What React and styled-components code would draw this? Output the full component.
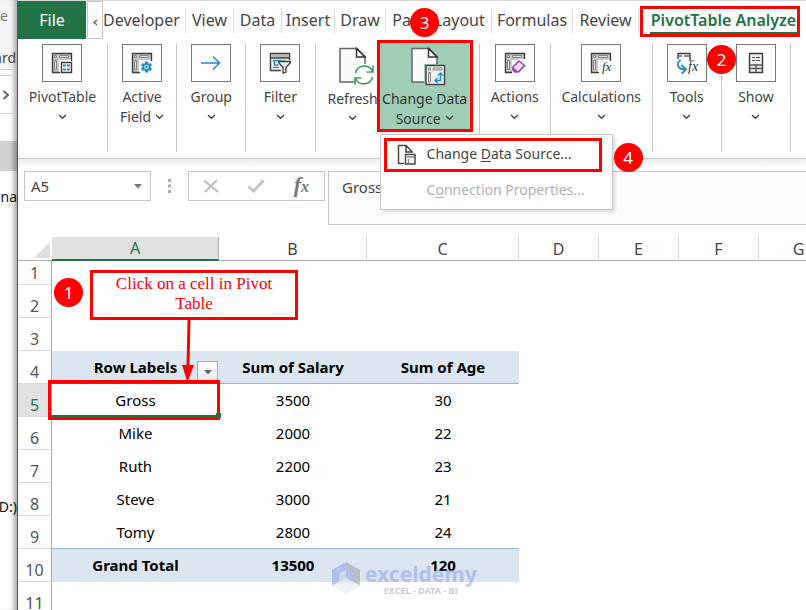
import styled, { createGlobalStyle } from "styled-components";
import { useState } from "react";

const tabs = ["Developer", "View", "Data", "Insert", "Draw", "Page Layout", "Formulas", "Review"];

const columns = ["A", "B", "C", "D", "E", "F", "G"];

const rows = [
  { n: 1 },
  { n: 2 },
  { n: 3 },
  { n: 4, kind: "head", cells: ["Row Labels", "Sum of Salary", "Sum of Age"] },
  { n: 5, cells: ["Gross", 3500, 30] },
  { n: 6, cells: ["Mike", 2000, 22] },
  { n: 7, cells: ["Ruth", 2200, 23] },
  { n: 8, cells: ["Steve", 3000, 21] },
  { n: 9, cells: ["Tomy", 2800, 24] },
  { n: 10, kind: "total", cells: ["Grand Total", 13500, 120] },
  { n: 11 },
];

const Chevron = () => (
  <svg width="9" height="6" viewBox="0 0 9 6" fill="none" stroke="#444" strokeWidth="1.4">
    <path d="M1 1l3.5 3.2L8 1" />
  </svg>
);

// small pivot grid shared by most of the ribbon icons
const PivotGrid = ({ children }) => (
  <svg width="22" height="22" viewBox="0 0 22 22" fill="none">
    <path d="M1.5 20.5V1.5h19v19z" fill="#c8c8c8" stroke="#3b3b3b" strokeWidth="1.4" />
    <path d="M8 8h12v12H8z" fill="#f7f7f7" />
    <path d="M3.5 3.5h2v2h-2zM8.5 3.5h9v2h-9zM3.5 8.5h2v9h-2z" fill="#ddd" stroke="#858585" />
    {children}
  </svg>
);

const PivotIcon = () => (
  <PivotGrid>
    <path d="M9 9h13v13H9z" fill="#fff" />
    <path d="M10.5 10.5h10v10h-10z" fill="#fff" stroke="#3b3b3b" strokeWidth="1.4" />
    <path d="M12 12.5h3v2h-3zM16 12.500h3v2h-3zM12 16.500h3v2h-3zM16 16.500h3v2h-3z" fill="#1e8bcd" />
  </PivotGrid>
);

const FieldIcon = () => (
  <PivotGrid>
    <path d="M12 9h10v13H9V14z" fill="#fff" />
    <path
      d="M15.500 9.500v11M10.700 12.200l9.600 5.600M20.300 12.200l-9.600 5.600"
      stroke="#1e8bcd"
      strokeWidth="3"
    />
    <circle cx="15.500" cy="15" r="3.200" fill="#d8ecf8" stroke="#1e8bcd" strokeWidth="1.800" />
    <circle cx="15.500" cy="15" r="1.200" fill="#1e8bcd" />
  </PivotGrid>
);

const GroupIcon = () => (
  <svg width="22" height="22" viewBox="0 0 22 22" fill="none" stroke="#1e8bcd" strokeWidth="1.500">
    <path d="M1 11h19M13 4.500l6.500 6.500-6.500 6.500" />
  </svg>
);

const FilterIcon = () => (
  <svg width="22" height="22" viewBox="0 0 22 22" fill="none">
    <path d="M1.500 1.500h19v17h-19z" fill="#fff" stroke="#3b3b3b" strokeWidth="1.500" />
    <path d="M2 2h18v4H2z" fill="#b5b5b5" />
    <path d="M2 6h18" stroke="#3b3b3b" strokeWidth="1.400" />
    <path d="M4 8.500h13M5.500 8v5h4" stroke="#1e8bcd" strokeWidth="1.600" />
    <path d="M4 15.500h6" stroke="#777" strokeWidth="1.500" />
    <path d="M13 22h9V8h-2L9 9z" fill="#fff" />
    <path d="M9.500 9.500h12v1l-4.500 5V20l-3 1v-5.500l-4.500-5z" fill="#eee" stroke="#3b3b3b" strokeWidth="1.300" />
  </svg>
);

const ActionsIcon = () => (
  <PivotGrid>
    <path d="M8 13l7-6h7v15H8z" fill="#fff" />
    <path d="M9 15l6-6 5.500 4.500-6 6.500H11l-2-2z" fill="#f4e3f8" stroke="#9b3fb5" strokeWidth="1.600" />
    <path d="M9 15l5.500 5H11l-2-2z" fill="#9b3fb5" />
  </PivotGrid>
);

const FxMark = ({ x, y, size }) => (
  <text x={x} y={y} fontFamily="Liberation Serif, serif" fontStyle="italic" fontSize={size} fill="#333">
    fx
  </text>
);

const CalcIcon = () => (
  <PivotGrid>
    <path d="M9 9h13v13H9z" fill="#fff" />
    <FxMark x="12" y="19" size="13" />
  </PivotGrid>
);

const ToolsIcon = () => (
  <svg width="24" height="22" viewBox="0 0 24 22" fill="none">
    <path d="M3 7V1.500h12V9" stroke="#3b3b3b" strokeWidth="1.400" />
    <path d="M4 4h3M9 4h5" stroke="#888" strokeWidth="2" />
    <path d="M5.500 8C.500 12 3 17.500 10 17.500M6.500 13l4.500 4.500L6.500 22" stroke="#1e8bcd" strokeWidth="1.800" />
    <FxMark x="13" y="19" size="14" />
  </svg>
);

const ShowIcon = () => (
  <svg width="16" height="22" viewBox="0 0 16 22" fill="none">
    <path d="M1.500 1.500h13v19h-13z" fill="#eee" stroke="#3b3b3b" strokeWidth="1.400" />
    <path d="M4 5.500h3M8 5.500h4M4 8.500h3M8 8.500h4" stroke="#555" />
    <path d="M1 13h14M1 16.500h14M8 13v7" stroke="#555" strokeWidth="1.400" />
  </svg>
);

const PageShape = () => (
  <>
    <path d="M2 1.500h17l8 8V35H2z" fill="#fafafa" stroke="#666" strokeWidth="1.500" />
    <path d="M18.500 1.500V10H27z" fill="#fff" stroke="#333" strokeWidth="1.500" />
  </>
);

const RefreshIcon = () => (
  <svg width="42" height="40" viewBox="-6 0 42 40" fill="none">
    <PageShape />
    <circle cx="26" cy="28" r="11" fill="#fff" />
    <path
      d="M17.500 26a9 9 0 0 1 17-1.500M34.500 30a9 9 0 0 1-17 1.500M35 18.500v6.500h-6.500M17 37.500V31h6.500"
      stroke="#3fa45b"
      strokeWidth="1.600"
    />
  </svg>
);

const SourceIcon = () => (
  <svg width="42" height="40" viewBox="-6 0 42 40" fill="none">
    <PageShape />
    <path d="M14 17h22v22H14z" fill="#9fcdb6" />
    <path d="M16 18.500h18.500v19H16z" fill="#f2f2f2" stroke="#444" strokeWidth="1.500" />
    <path d="M18.500 21h2v2h-2zM23 21h9v2h-9zM18.500 25.500h2V35h-2z" fill="#ddd" stroke="#888" />
    <path d="M30.500 26v7.500h-5M28 28.500l2.500-2.500 2.500 2.500M27.500 31L25 33.500l2.500 2.500" stroke="#1e8bcd" strokeWidth="1.500" />
  </svg>
);

const MenuIcon = () => (
  <svg width="20" height="21" viewBox="0 0 20 21" fill="none" stroke="#444" strokeWidth="1.500">
    <path d="M7 19.500H1.500v-18H9l6 6V9M9 1.500V8h6" />
    <path d="M8.500 10.500h9.500v9.500H8.500z" />
    <path d="M10 13h7M11.500 15v4" stroke="#888" />
  </svg>
);

const groupsBefore = [
  { label: "PivotTable", icon: <PivotIcon />, size: 90 },
  { label: "Active", second: "Field", icon: <FieldIcon />, size: 69 },
  { label: "Group", icon: <GroupIcon />, size: 69 },
  { label: "Filter", icon: <FilterIcon />, size: 69 },
];

const groupsAfter = [
  { label: "Actions", icon: <ActionsIcon />, size: 71 },
  { label: "Calculations", icon: <CalcIcon />, size: 102 },
  { label: "Tools", icon: <ToolsIcon />, size: 69 },
  { label: "Show", icon: <ShowIcon />, size: 69 },
];

const RibbonGroup = ({ group }) => (
  <Styled.Group $size={group.size}>
    <Styled.RibbonButton>
      <Styled.IconBox>{group.icon}</Styled.IconBox>
      <Styled.Line>{group.label}</Styled.Line>
      <Styled.Line>
        {group.second}
        <Chevron />
      </Styled.Line>
    </Styled.RibbonButton>
  </Styled.Group>
);

export default function App() {
  const [cellName, setCellName] = useState("A5");
  const [formula, setFormula] = useState("Gross");

  return (
    <>
      <GlobalStyle />
      <Styled.Page>
        <Styled.Behind>
          <Styled.BehindTop>
            <span>te</span>
            <span>ard</span>
          </Styled.BehindTop>
          <Styled.BehindBar>
            <svg width="8" height="12" viewBox="0 0 8 12" fill="none" stroke="#666" strokeWidth="2">
              <path d="M1.500 2l4.500 4-4.500 4" />
            </svg>
          </Styled.BehindBar>
          <Styled.BehindBlock />
          <Styled.BehindText $top={16}>ona</Styled.BehindText>
          <Styled.BehindText $top={290}>D:)</Styled.BehindText>
        </Styled.Behind>

        <Styled.Window>
          <Styled.TabBar>
            <Styled.FileTab>File</Styled.FileTab>
            <Styled.ScrollTab aria-label="Scroll tabs">
              <svg width="5" height="7" viewBox="0 0 5 7" fill="none" stroke="#555" strokeWidth="1.200">
                <path d="M4 1L1 3.500 4 6" />
              </svg>
            </Styled.ScrollTab>
            <Styled.Tabs>
              {tabs.map((tab) => (
                <Styled.Tab key={tab}>{tab}</Styled.Tab>
              ))}
              <Styled.ActiveTab>
                <span>PivotTable Analyze</span>
              </Styled.ActiveTab>
            </Styled.Tabs>
            <Styled.Badge $left={392} $top={7}>3</Styled.Badge>
          </Styled.TabBar>

          <Styled.Ribbon>
            {groupsBefore.map((g) => (
              <RibbonGroup key={g.label} group={g} />
            ))}
            <Styled.Group $size={165}>
              <Styled.RefreshButton>
                <RefreshIcon />
                <Styled.Line>Refresh</Styled.Line>
                <Styled.Line>
                  <Chevron />
                </Styled.Line>
              </Styled.RefreshButton>
              <Styled.SourceButton>
                <SourceIcon />
                <Styled.Line>Change Data</Styled.Line>
                <Styled.Line>
                  Source
                  <Chevron />
                </Styled.Line>
              </Styled.SourceButton>
              <Styled.Menu>
                <Styled.MenuItem $marked>
                  <MenuIcon />
                  <span>
                    Change <u>D</u>ata Source...
                  </span>
                </Styled.MenuItem>
                <Styled.MenuItem disabled>
                  <i />
                  <span>
                    C<u>o</u>nnection Properties...
                  </span>
                </Styled.MenuItem>
                <Styled.Badge $left={233} $top={8}>4</Styled.Badge>
              </Styled.Menu>
            </Styled.Group>
            {groupsAfter.map((g) => (
              <RibbonGroup key={g.label} group={g} />
            ))}
            <Styled.Badge $left={689} $top={6}>2</Styled.Badge>
          </Styled.Ribbon>

          <Styled.FormulaBar>
            <Styled.NameBox>
              <input aria-label="Name box" value={cellName} onChange={(e) => setCellName(e.target.value)} />
              <svg width="8" height="5" viewBox="0 0 8 5">
                <path d="M0 0h8L4 4.500z" fill="#777" />
              </svg>
            </Styled.NameBox>
            <Styled.Dots>
              <svg width="3" height="14" viewBox="0 0 3 14" fill="#aaa">
                <path d="M0 0h3v3H0zM0 5.500h3v3H0zM0 11h3v3H0z" />
              </svg>
            </Styled.Dots>
            <Styled.FxBox>
              <button aria-label="Cancel">
                <svg width="16" height="14" viewBox="0 0 16 14" fill="none" stroke="#bdbdbd" strokeWidth="2.200">
                  <path d="M1 1.500l14 11.500M14 1L2 13" />
                </svg>
              </button>
              <button aria-label="Enter">
                <svg width="18" height="14" viewBox="0 0 18 14" fill="none" stroke="#c4c4c4" strokeWidth="3">
                  <path d="M1.500 7.500l5 4.500L16.500 1.500" />
                </svg>
              </button>
              <Styled.FxButton>
                f<small>x</small>
              </Styled.FxButton>
            </Styled.FxBox>
            <Styled.FormulaInput
              aria-label="Formula"
              value={formula}
              onChange={(e) => setFormula(e.target.value)}
            />
          </Styled.FormulaBar>

          <Styled.Sheet>
            <Styled.Grid>
              <colgroup>
                <col width="34" />
                <col width="167" />
                <col width="148" />
                <col width="152" />
                <col width="80" />
                <col width="80" />
                <col width="80" />
                <col width="80" />
              </colgroup>
              <thead>
                <tr>
                  <Styled.Corner>
                    <svg width="16" height="16" viewBox="0 0 16 16">
                      <path d="M16 0v16H0z" fill="#dfdfdf" />
                    </svg>
                  </Styled.Corner>
                  {columns.map((c) => (
                    <Styled.ColHead key={c} $active={c === "A"}>
                      {c}
                    </Styled.ColHead>
                  ))}
                </tr>
              </thead>
              <tbody>
                {rows.map((row) => (
                  <Styled.Row key={row.n} $short={row.n === 1}>
                    <Styled.RowHead $active={row.n === 5}>{row.n}</Styled.RowHead>
                    {columns.map((c, i) => (
                      <Styled.Cell key={c} $kind={i < 3 ? row.kind : undefined}>
                        {row.cells?.[i]}
                        {row.n === 4 && i === 0 && (
                          <Styled.FilterButton aria-label="Filter row labels">
                            <svg width="8" height="5" viewBox="0 0 8 5">
                              <path d="M0 0h8L4 4.500z" fill="#666" />
                            </svg>
                          </Styled.FilterButton>
                        )}
                        {row.n === 5 && i === 0 && <Styled.Selection />}
                      </Styled.Cell>
                    ))}
                  </Styled.Row>
                ))}
              </tbody>
            </Styled.Grid>

            <Styled.Badge $left={36} $top={41}>1</Styled.Badge>
            <Styled.Callout>Click on a cell in Pivot Table</Styled.Callout>
            <Styled.Arrow width="12" height="64" viewBox="0 0 12 64">
              <path d="M7 0L6 48" stroke="#f00" strokeWidth="3" />
              <path d="M0 46h12L5.500 63z" fill="#f00" />
            </Styled.Arrow>

            <Styled.Watermark>
              <svg width="28" height="32" viewBox="0 0 28 32">
                <path d="M14 0L0 8v16l7-4v-8l7-4z" fill="#7f9bea" />
                <path d="M14 0l14 8v16l-7-4v-8l-7-4z" fill="#8d9aa8" />
                <path d="M14 8l-7 4v8l7-4z" fill="#b9c9ec" />
                <path d="M14 8l7 4v8l-7-4z" fill="#7f9bea" />
                <path d="M0 24l14-8 14 8-14 8z" fill="#dde6ee" />
              </svg>
              <div>
                <b>exceldemy</b>
                <small>EXCEL - DATA - BI</small>
              </div>
            </Styled.Watermark>
          </Styled.Sheet>
        </Styled.Window>
      </Styled.Page>
    </>
  );
}

const GlobalStyle = createGlobalStyle`
  * {
    box-sizing: border-box;
  }

  body {
    margin: 0;
    background: #fff;
    font-family: "Noto Sans", "Open Sans", sans-serif;
    color: #444;
  }

  button, input {
    font: inherit;
    color: inherit;
    margin: 0;
    padding: 0;
    border: none;
    background: none;
  }
`;

const Styled = {
  Page: styled.div`
    display: flex;
    height: 100vh;
    overflow: hidden;
  `,

  Behind: styled.aside`
    width: 17px;
    flex-shrink: 0;
    overflow: hidden;
    font-size: 14px;
    line-height: 20px;
    box-shadow: inset -6px 0 5px -3px rgba(0, 0, 0, 0.35);
  `,

  BehindTop: styled.div`
    display: flex;
    flex-direction: column;
    align-items: flex-end;
    gap: 22px;
    height: 70px;
    padding: 6px 1px 0 0;
    background: rgba(200, 205, 215, 0.2);
    border-bottom: 1px solid #ccc;

    span:first-child {
      padding-right: 8px;
      color: #777;
    }
  `,

  BehindBar: styled.div`
    display: flex;
    align-items: center;
    height: 39px;
    margin-top: 5px;
    padding-left: 2px;
    border-top: 1px solid #ccc;
    border-bottom: 1px solid #ccc;
  `,

  BehindBlock: styled.div`
    height: 30px;
    margin-top: 27px;
    background: rgba(0, 0, 0, 0.18);
  `,

  BehindText: styled.div`
    display: flex;
    justify-content: flex-end;
    margin-top: ${({ $top }) => $top}px;
    color: #111;
  `,

  Window: styled.main`
    flex: 1;
    min-width: 0;
    display: flex;
    flex-direction: column;
    border-left: 1px solid #217346;
    border-top: 1px solid #d6d6d6;
  `,

  TabBar: styled.nav`
    position: relative;
    display: flex;
    height: 38px;
    font-size: 16px;
  `,

  FileTab: styled.button`
    width: 68px;
    background: #217346;
    color: #fff;
  `,

  ScrollTab: styled.button`
    width: 16px;
    margin-left: 1px;
    border: 1px solid #c6c6c6;
  `,

  Tabs: styled.div`
    flex: 1;
    display: grid;
    grid-template-columns: 83fr 48fr 48fr 53fr 51fr 106fr 81fr 66fr 167fr;
    align-items: center;
  `,

  Tab: styled.button`
    height: 25px;
    border-right: 1px solid #ddd;
    white-space: nowrap;
    min-width: 0;
    display: flex;
    justify-content: center;
    align-items: center;

    &:first-child {
      justify-content: flex-start;
    }
  `,

  ActiveTab: styled.button`
    height: 31px;
    margin: 2px 6px 0 1px;
    padding: 0 0 0 7px;
    border: 3px solid #f00;
    color: #217346;
    font-weight: 600;
    white-space: nowrap;
    min-width: 0;

    span {
      display: block;
      line-height: 23px;
      border-bottom: 2px solid #217346;
    }
  `,

  Ribbon: styled.section`
    position: relative;
    display: flex;
    height: 120px;
    padding: 5px 15px 6px 0;
    border-bottom: 1px solid #c6c6c6;
    font-size: 14px;
    line-height: 20px;
  `,

  Group: styled.div`
    position: relative;
    flex: ${({ $size }) => $size} 1 0;
    min-width: 0;
    display: flex;
    justify-content: center;
    border-right: 1px solid #c6c6c6;
  `,

  RibbonButton: styled.button`
    display: flex;
    flex-direction: column;
    align-items: center;
  `,

  IconBox: styled.span`
    display: flex;
    align-items: center;
    justify-content: center;
    width: 40px;
    height: 38px;
    margin-bottom: 5px;
    border: 1px solid #777;
  `,

  Line: styled.span`
    display: flex;
    align-items: center;
    justify-content: center;
    gap: 4px;
    height: 20px;
    white-space: nowrap;
  `,

  RefreshButton: styled.button`
    display: flex;
    flex-direction: column;
    align-items: center;
    width: 64px;
    padding: 3px 0 0 10px;

    svg:first-child {
      margin-bottom: 2px;
    }
  `,

  SourceButton: styled.button`
    display: flex;
    flex-direction: column;
    align-items: center;
    flex: 1;
    height: 92px;
    margin: -4px 6px 0 -3px;
    padding-top: 4px;
    background: #9fcdb6;
    color: #333;
    border: 3px solid #f00;

    svg:first-child {
      margin-bottom: 2px;
    }
  `,

  Menu: styled.div`
    position: absolute;
    z-index: 2;
    left: 64px;
    top: 90px;
    width: 233px;
    height: 76px;
    padding: 3px;
    background: #fff;
    border: 1px solid #c6c6c6;
    box-shadow: 2px 2px 4px rgba(0, 0, 0, 0.15);
  `,

  MenuItem: styled.button`
    display: flex;
    align-items: center;
    gap: 10px;
    width: 218px;
    height: 34px;
    padding: 0 0 2px 10px;
    border: 3px solid ${({ $marked }) => ($marked ? "#f00" : "transparent")};
    color: ${({ disabled }) => (disabled ? "#b0b0b0" : "#444")};
    white-space: nowrap;

    &:disabled {
      padding-top: 4px;
    }

    svg,
    i {
      width: 20px;
      flex-shrink: 0;
    }

    u {
      text-underline-offset: 2px;
    }
  `,

  FormulaBar: styled.section`
    display: flex;
    align-items: flex-start;
    height: 78px;
    padding: 12px 0 0 6px;
    background: linear-gradient(#ececec, #fff 8px);
    font-size: 15px;
  `,

  NameBox: styled.div`
    display: flex;
    align-items: center;
    width: 127px;
    height: 30px;
    padding: 0 8px 0 6px;
    border: 1px solid #c6c6c6;

    input {
      flex: 1;
      min-width: 0;
    }
  `,

  Dots: styled.div`
    display: flex;
    justify-content: center;
    align-items: center;
    width: 37px;
    height: 30px;
  `,

  FxBox: styled.div`
    display: flex;
    align-items: center;
    justify-content: space-between;
    width: 137px;
    height: 30px;
    padding: 0 15px 0 14px;
    border: 1px solid #c6c6c6;

    svg {
      display: block;
    }
  `,

  FxButton: styled.button`
    font-family: "Liberation Serif", serif;
    font-style: italic;
    font-weight: 700;
    font-size: 22px;
    line-height: 24px;
    color: #777;

    small {
      font-size: 16px;
    }
  `,

  FormulaInput: styled.input`
    flex: 1;
    min-width: 0;
    height: 54px;
    margin-left: 3px;
    padding: 0 0 22px 13px;
    border: 1px solid #c6c6c6;
    border-right: none;
    background: #fdfdfd;
  `,

  Sheet: styled.section`
    position: relative;
    flex: 1;
    overflow: hidden;
  `,

  Grid: styled.table`
    table-layout: fixed;
    width: 821px;
    border-collapse: separate;
    border-spacing: 0;
  `,

  Corner: styled.td`
    height: 24px;
    padding: 3px 2px 0 0;
    text-align: right;
    border-bottom: 1px solid #ababab;

    svg {
      display: block;
      margin-left: auto;
    }
  `,

  ColHead: styled.th`
    height: 24px;
    padding: 0;
    font-size: 16px;
    font-weight: 400;
    line-height: 22px;
    color: ${({ $active }) => ($active ? "#217346" : "#444")};
    background: ${({ $active }) => ($active ? "#e1e1e1" : "#fff")};
    border-right: 1px solid ${({ $active }) => ($active ? "#ababab" : "#d8d8d8")};
    border-bottom: ${({ $active }) => ($active ? "2px solid #217346" : "1px solid #ababab")};
  `,

  Row: styled.tr`
    height: ${({ $short }) => ($short ? 24 : 33)}px;
  `,

  RowHead: styled.th`
    padding: 0;
    font-size: 16px;
    font-weight: 400;
    line-height: 22px;
    vertical-align: bottom;
    color: ${({ $active }) => ($active ? "#217346" : "#555")};
    background: ${({ $active }) => ($active ? "#e1e1e1" : "#fff")};
    border-right: 1px solid #ababab;
    border-bottom: 1px solid #d8d8d8;
  `,

  Cell: styled.td`
    position: relative;
    padding: 0;
    font-size: 15px;
    line-height: 22px;
    text-align: center;
    color: #000;
    font-weight: ${({ $kind }) => ($kind ? 700 : 400)};
    background: ${({ $kind }) => ($kind ? "#dce6f1" : "transparent")};
    border-bottom: 1px solid ${({ $kind }) => ($kind === "head" ? "#95b3d7" : "transparent")};
    box-shadow: ${({ $kind }) => ($kind === "total" ? "0 -1px 0 #95b3d7" : "none")};
  `,

  FilterButton: styled.button`
    position: absolute;
    right: 1px;
    bottom: 0;
    width: 21px;
    height: 22px;
    display: flex;
    align-items: center;
    justify-content: center;
    background: linear-gradient(#fff, #e8ebf0);
    border: 1px solid #ababab;
  `,

  Selection: styled.div`
    position: absolute;
    z-index: 1;
    inset: -4px -1px -4px -4px;
    border: 3px solid #f00;
    box-shadow: inset 0 -2px 0 #217346, inset 0 1px 0 #217346;

    &::after {
      content: "";
      position: absolute;
      right: -4px;
      bottom: -1px;
      width: 5px;
      height: 5px;
      background: #217346;
    }
  `,

  Badge: styled.span`
    position: absolute;
    z-index: 3;
    left: ${({ $left }) => $left}px;
    top: ${({ $top }) => $top}px;
    display: flex;
    align-items: center;
    justify-content: center;
    width: 29px;
    height: 29px;
    border-radius: 50%;
    background: #f00;
    color: #fff;
    font-size: 17px;
  `,

  Callout: styled.div`
    position: absolute;
    left: 72px;
    top: 33px;
    width: 208px;
    height: 50px;
    padding: 1px 16px;
    border: 3px solid #f00;
    background: #fff;
    color: #f00;
    font-family: "Liberation Serif", serif;
    font-size: 17px;
    line-height: 20px;
    text-align: center;
  `,

  Arrow: styled.svg`
    position: absolute;
    z-index: 2;
    left: 164px;
    top: 82px;
  `,

  Watermark: styled.div`
    position: absolute;
    left: 314px;
    top: 325px;
    display: flex;
    gap: 5px;
    opacity: 0.5;

    b,
    small {
      display: block;
      text-align: center;
    }

    b {
      font-size: 21px;
      line-height: 24px;
      color: #7f9bea;
    }

    small {
      font-size: 9px;
      line-height: 10px;
      font-weight: 700;
      color: #8d9aa8;
    }
  `,
};
